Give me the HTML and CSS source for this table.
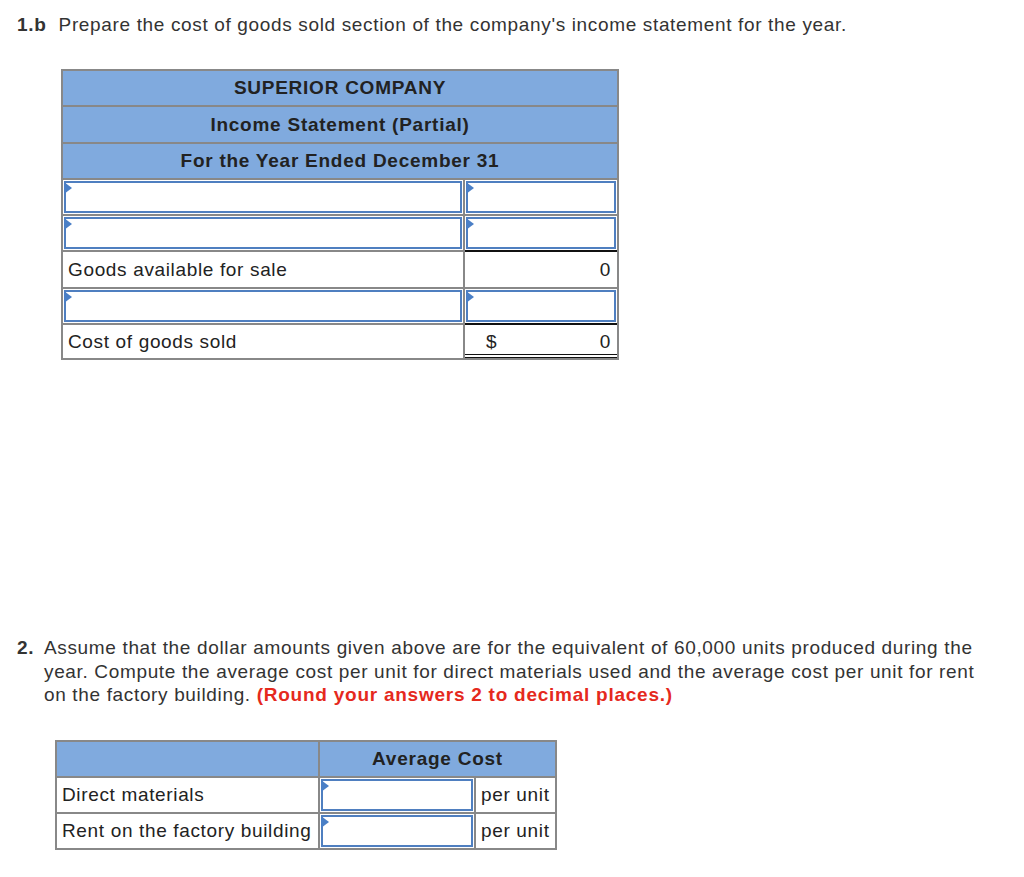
FILE: index.html
```html
<!DOCTYPE html>
<html>
<head>
<meta charset="utf-8">
<link rel="stylesheet" href="styles.css">
</head>
<body>
<div class="part1">
  <p class="heading"><b>1.b</b>&nbsp; Prepare the cost of goods sold section of the company's income statement for the year.</p>
  <div class="is">
    <div class="hd span2">SUPERIOR COMPANY</div>
    <div class="hd span2">Income Statement (Partial)</div>
    <div class="hd span2">For the Year Ended December 31</div>
    <div class="cell inc"><div class="inp"></div></div>
    <div class="cell inc"><div class="inp"></div></div>
    <div class="cell inc"><div class="inp"></div></div>
    <div class="cell inc"><div class="inp"></div></div>
    <div class="cell lbl">Goods available for sale</div>
    <div class="cell val subtotal">0</div>
    <div class="cell inc"><div class="inp"></div></div>
    <div class="cell inc"><div class="inp"></div></div>
    <div class="cell lbl">Cost of goods sold</div>
    <div class="cell val total"><span>$</span><span>0</span></div>
  </div>
</div>
<div class="part2">
  <div class="q">
    <b class="num">2.</b>
    <p>Assume that the dollar amounts given above are for the equivalent of 60,000 units produced during the year. Compute the average cost per unit for direct materials used and the average cost per unit for rent on the factory building. <b class="red">(Round your answers 2 to decimal places.)</b></p>
  </div>
  <div class="avg">
    <div class="hd"></div>
    <div class="hd span2">Average Cost</div>
    <div class="cell lbl">Direct materials</div>
    <div class="cell inc"><div class="inp"></div></div>
    <div class="cell lbl">per unit</div>
    <div class="cell lbl">Rent on the factory building</div>
    <div class="cell inc"><div class="inp"></div></div>
    <div class="cell lbl">per unit</div>
  </div>
</div>
</body>
</html>
```
FILE: styles.css
```css
body {
  margin: 0;
  font-family: "Liberation Sans", Arial, sans-serif;
  color: #222;
  background: #fff;
  font-size: 19px;
  letter-spacing: 0.65px;
}
b { letter-spacing: 0.75px; }
.part1 {
  padding: 14px 0 0 17px;
}
.heading {
  margin: 0;
  line-height: 22px;
  color: #333;
}
.is, .avg {
  display: grid;
  gap: 2px;
  padding: 2px;
  background: #888;
}
.is {
  margin: 33px 0 0 44px;
  width: 554px;
  grid-template-columns: 400px 152px;
  grid-template-rows: 34px 35px 34px 34px 34px 35px 34px 33px;
}
.hd {
  background: #80aade;
  font-weight: bold;
  letter-spacing: 0.75px;
  color: #222;
  display: flex;
  align-items: center;
  justify-content: center;
}
.span2 { grid-column: span 2; }
.cell {
  background: #fff;
  display: flex;
  align-items: center;
  min-width: 0;
}
.lbl {
  padding: 0 5px;
  white-space: nowrap;
}
.val {
  justify-content: flex-end;
  padding: 0 6px;
}
.subtotal { box-shadow: 0 -2px 0 #111; }
.total {
  box-shadow: 0 -2px 0 #111;
  border-bottom: 4px double #111;
  justify-content: space-between;
  padding: 4px 6px 0 21px;
}
.inc {
  padding: 1px;
  align-items: stretch;
  position: relative;
}
.inp {
  flex: 1;
  box-sizing: border-box;
  border: 2px solid #4f7fc0;
  background: #fff;
}
.inc::before {
  content: "";
  position: absolute;
  left: 1px;
  top: 2px;
  border-left: 8px solid #4a7fc6;
  border-top: 6px solid transparent;
  border-bottom: 6px solid transparent;
}
.part2 {
  padding: 276px 0 0 17px;
}
.q {
  display: flex;
  width: 985px;
}
.num {
  width: 27px;
  flex: none;
  line-height: 23.5px;
  color: #333;
}
.q p {
  margin: 0;
  line-height: 23.5px;
  color: #333;
}
.red { color: #e5291d; }
.avg {
  margin: 33px 0 0 38px;
  width: 498px;
  grid-template-columns: 261px 154px 79px;
  grid-template-rows: 34px 34px 34px;
}
```
